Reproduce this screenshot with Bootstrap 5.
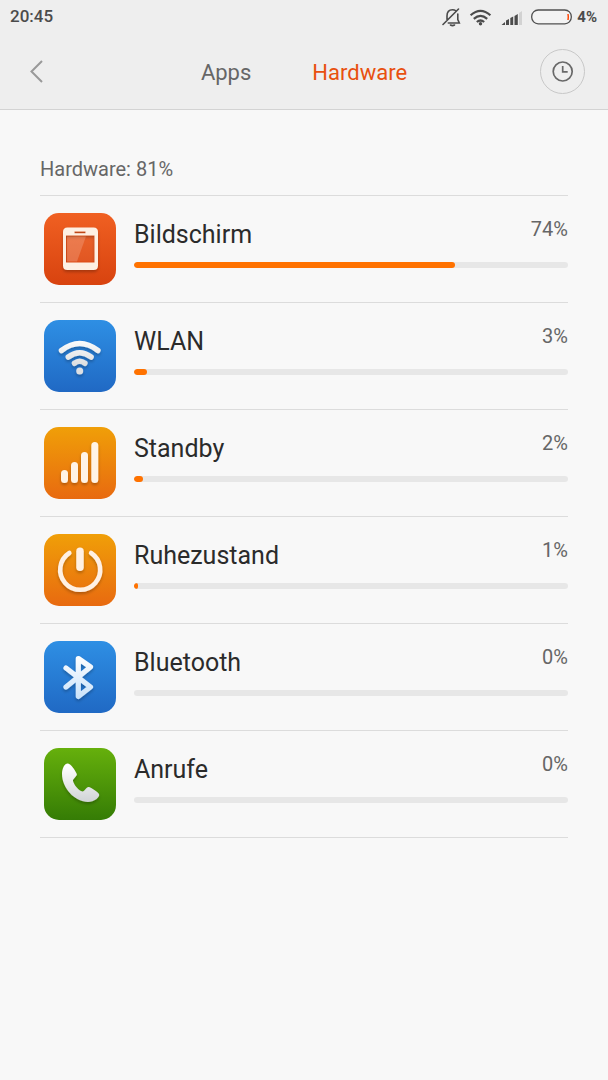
<!DOCTYPE html>
<html lang="de">
<head>
<meta charset="utf-8">
<meta name="viewport" content="width=device-width, initial-scale=1">
<title>Hardware</title>
<link rel="stylesheet" href="https://cdn.jsdelivr.net/npm/bootstrap@5.3.0/dist/css/bootstrap.min.css">
<style>
  body { font-family: Roboto, "Noto Sans", sans-serif; background: #f8f8f8; color: #2b2b2b; }
  .app-header { background: #eee; border-bottom: 1px solid #d3d3d3; }
  .status-bar { height: 34px; padding: 0 11px 0 10px; font-size: 17px; font-weight: 500; color: #4b4b4b; }
  .status-charge { font-size: 15px; font-weight: 700; }
  .toolbar { height: 75px; padding: 0 23px; }
  .tool-btn { width: 45px; height: 45px; padding: 0; border: 0; background: none; color: #999; }
  .tool-btn svg { display: block; }
  .history-btn { border: 1px solid #c8c8c8; border-radius: 50%; color: #686868; }
  .tabs { gap: 61px; }
  .tabs a { font-size: 22px; line-height: 30px; padding-top: 3px; color: #666; text-decoration: none; }
  .tabs a.active { color: #e8500f; }
  .usage { padding: 44px 40px; }
  .usage-total { font-size: 20px; line-height: 30px; margin: 0 0 11px; color: #666; }
  .usage-list { border-top: 1px solid #dcdcdc; }
  .usage-item { border-bottom: 1px solid #dcdcdc; padding: 17px 0 17px 4px; gap: 18px; }
  .usage-icon { width: 72px; height: 72px; flex: none; }
  .usage-name { font-size: 25px; line-height: 30px; font-weight: 400; margin: 7px 0 0; }
  .usage-value { font-size: 20px; line-height: 24px; margin-top: 4px; color: #666; }
  .usage-bar { height: 6px; margin-top: 12px; border-radius: 3px; background: #e7e7e7; }
  .usage-bar .progress-bar { background: #ff7200; border-radius: 3px; }
</style>
</head>
<body>
<svg width="0" height="0" class="position-absolute" aria-hidden="true">
  <defs>
    <linearGradient id="red" x2="0" y2="1"><stop stop-color="#f06022"/><stop offset="1" stop-color="#d8430f"/></linearGradient>
    <linearGradient id="blue" x2="0" y2="1"><stop stop-color="#2e8fe4"/><stop offset="1" stop-color="#2069c4"/></linearGradient>
    <linearGradient id="amber" x2="0" y2="1"><stop stop-color="#f09f08"/><stop offset="1" stop-color="#e86a10"/></linearGradient>
    <linearGradient id="green" x2="0" y2="1"><stop stop-color="#66b00c"/><stop offset="1" stop-color="#357c05"/></linearGradient>
    <linearGradient id="silver" gradientUnits="userSpaceOnUse" x1="0" y1="18" x2="0" y2="54"><stop stop-color="#fff"/><stop offset="1" stop-color="#d0d3d6"/></linearGradient>
    <linearGradient id="ice" gradientUnits="userSpaceOnUse" x1="0" y1="14" x2="0" y2="58"><stop stop-color="#fff"/><stop offset="1" stop-color="#c9e2fa"/></linearGradient>
    <filter id="drop" x="-30%" y="-30%" width="160%" height="160%"><feDropShadow dx="0" dy="2" stdDeviation="1.5" flood-opacity=".25"/></filter>
  </defs>
</svg>

<header class="app-header">
  <div class="status-bar d-flex align-items-center justify-content-between">
    <span>20:45</span>
    <div class="d-flex align-items-center">
      <svg width="85" height="24" viewBox="442 4 85 24" fill="none" stroke="#4b4b4b" stroke-width="1.6" stroke-linecap="round" aria-hidden="true">
        <path d="M443 23.500 458.500 8M447 18.500V15q0-6.300 5.500-6.300 2 0 3 .8M457.800 13v5.500l1.500 3.500h-11M450.500 24q2 1.200 4 0"/>
        <g stroke-width="2.200" stroke-linecap="butt">
          <path d="M470.600 14.300q9.900-8.800 19.800 0M473.800 17.800q6.700-5.800 13.400 0M476.800 21q3.700-3 7.400 0"/>
        </g>
        <circle cx="480.500" cy="22.700" r="1.700" fill="#4b4b4b" stroke="none"/>
        <path stroke="none" fill="#4b4b4b" d="M501.500 24l3.500-3v3zM506 19.500l3-1.500v6h-3zM510.300 17l2.900-1.500V24h-2.900zM514.500 15l3.300-2v11h-3.300z"/>
        <path stroke="none" fill="#d2d2d2" d="M519 12l3-2v14h-3z"/>
      </svg>
      <svg width="42" height="18" viewBox="0 0 42 18" class="ms-1 me-1" role="img" aria-label="Akku">
        <rect x="0.700" y="2" width="39.600" height="13.800" rx="6.500" fill="#f3f3f3" stroke="#505050" stroke-width="1.300"/>
        <path d="M37 6q1.200 3 0 6z" fill="#ff4a0a" stroke="#ff4a0a"/>
      </svg>
      <span class="status-charge">4%</span>
    </div>
  </div>
  <div class="toolbar d-flex align-items-center">
    <button type="button" class="tool-btn" aria-label="Zurück">
      <svg width="45" height="45" viewBox="0 0 45 45" fill="none" stroke="currentColor" stroke-width="2"><path d="M19 12 8.500 22.500 19 33"/></svg>
    </button>
    <nav class="tabs flex-grow-1 d-flex justify-content-center" aria-label="Ansicht">
      <a href="#apps">Apps</a>
      <a href="#hardware" class="active" aria-current="page">Hardware</a>
    </nav>
    <button type="button" class="tool-btn history-btn" aria-label="Verlauf">
      <svg width="43" height="43" viewBox="0 0 43 43" fill="none" stroke="currentColor" stroke-width="1.700"><circle cx="21.700" cy="21.500" r="9.500"/><path d="M21.700 16v5.800h5"/></svg>
    </button>
  </div>
</header>

<main class="usage" id="hardware">
  <h1 class="usage-total fw-normal">Hardware: 81%</h1>
  <ul class="usage-list list-unstyled mb-0">
    <li class="usage-item d-flex">
      <svg class="usage-icon" viewBox="0 0 72 72" aria-hidden="true">
        <rect width="72" height="72" rx="15" fill="url(#red)"/>
        <g filter="url(#drop)"><path fill="#fdf0e3" fill-rule="evenodd" d="M23.500 14.500h26q4.500 0 4.500 4.500v33.500q0 4.500-4.500 4.500h-26q-4.500 0-4.500-4.500V19q0-4.500 4.500-4.500zm-1.500 8v27h28.500v-27zm8.500-4v1.800h11v-1.800z"/></g>
        <path d="M23 23.500h19L33 48.500H23z" fill="#fff" opacity=".22"/><path d="M42 23.500h8v25H33z" fill="#fff" opacity=".06"/>
      </svg>
      <div class="flex-grow-1">
        <div class="d-flex justify-content-between align-items-start"><h2 class="usage-name">Bildschirm</h2><span class="usage-value">74%</span></div>
        <div class="progress usage-bar" role="progressbar" aria-label="Bildschirm" aria-valuenow="74" aria-valuemin="0" aria-valuemax="100"><div class="progress-bar" style="width:74%"></div></div>
      </div>
    </li>
    <li class="usage-item d-flex">
      <svg class="usage-icon" viewBox="0 0 72 72" aria-hidden="true">
        <rect width="72" height="72" rx="15" fill="url(#blue)"/>
        <g filter="url(#drop)" fill="none" stroke="url(#silver)" stroke-width="5.500" stroke-linecap="round"><path d="M17.500 30.500q18.200-14 36.400 0M24.300 37q11.400-8.500 22.800 0M30.500 43.300q5.200-4 10.400 0"/><circle cx="35.700" cy="51" r="3.500" fill="#dcdfe3" stroke="none"/></g>
      </svg>
      <div class="flex-grow-1">
        <div class="d-flex justify-content-between align-items-start"><h2 class="usage-name">WLAN</h2><span class="usage-value">3%</span></div>
        <div class="progress usage-bar" role="progressbar" aria-label="WLAN" aria-valuenow="3" aria-valuemin="0" aria-valuemax="100"><div class="progress-bar" style="width:3%"></div></div>
      </div>
    </li>
    <li class="usage-item d-flex">
      <svg class="usage-icon" viewBox="0 0 72 72" aria-hidden="true">
        <rect width="72" height="72" rx="15" fill="url(#amber)"/>
        <g filter="url(#drop)" fill="#fff3e6"><rect x="17" y="43" width="7" height="13" rx="3.500"/><rect x="27" y="35" width="7" height="21" rx="3.500"/><rect x="37" y="25" width="7" height="31" rx="3.500"/><rect x="47.300" y="15" width="7" height="41" rx="3.500"/></g>
      </svg>
      <div class="flex-grow-1">
        <div class="d-flex justify-content-between align-items-start"><h2 class="usage-name">Standby</h2><span class="usage-value">2%</span></div>
        <div class="progress usage-bar" role="progressbar" aria-label="Standby" aria-valuenow="2" aria-valuemin="0" aria-valuemax="100"><div class="progress-bar" style="width:2%"></div></div>
      </div>
    </li>
    <li class="usage-item d-flex">
      <svg class="usage-icon" viewBox="0 0 72 72" aria-hidden="true">
        <rect width="72" height="72" rx="15" fill="url(#amber)"/>
        <g filter="url(#drop)" fill="none" stroke="#fff0e3" stroke-linecap="round"><path stroke-width="4.600" d="M25.300 19a20 20 0 1 0 21.800 0"/><path stroke-width="7.500" d="M36 17.300v16"/></g>
      </svg>
      <div class="flex-grow-1">
        <div class="d-flex justify-content-between align-items-start"><h2 class="usage-name">Ruhezustand</h2><span class="usage-value">1%</span></div>
        <div class="progress usage-bar" role="progressbar" aria-label="Ruhezustand" aria-valuenow="1" aria-valuemin="0" aria-valuemax="100"><div class="progress-bar" style="width:1%"></div></div>
      </div>
    </li>
    <li class="usage-item d-flex">
      <svg class="usage-icon" viewBox="0 0 72 72" aria-hidden="true">
        <rect width="72" height="72" rx="15" fill="url(#blue)"/>
        <path filter="url(#drop)" fill="none" stroke="url(#ice)" stroke-width="5.200" stroke-linecap="round" stroke-linejoin="round" d="M22 27 46.500 46 34.300 55.500V17.500L46.500 26 22 46"/>
      </svg>
      <div class="flex-grow-1">
        <div class="d-flex justify-content-between align-items-start"><h2 class="usage-name">Bluetooth</h2><span class="usage-value">0%</span></div>
        <div class="progress usage-bar" role="progressbar" aria-label="Bluetooth" aria-valuenow="0" aria-valuemin="0" aria-valuemax="100"><div class="progress-bar" style="width:0%"></div></div>
      </div>
    </li>
    <li class="usage-item d-flex">
      <svg class="usage-icon" viewBox="0 0 72 72" aria-hidden="true">
        <rect width="72" height="72" rx="15" fill="url(#green)"/>
        <path filter="url(#drop)" fill="url(#silver)" d="M18 26C18 20 21 15 24 15.500C27 16 31 22 32.800 26C33.500 28 28.500 31 29 33C30 37 35 43 38.500 43.500C41 43.500 42 38.500 45 39C48 40 54 44 55 46C56.500 49 50 54 44 54C31 54 18 40 18 26z"/>
      </svg>
      <div class="flex-grow-1">
        <div class="d-flex justify-content-between align-items-start"><h2 class="usage-name">Anrufe</h2><span class="usage-value">0%</span></div>
        <div class="progress usage-bar" role="progressbar" aria-label="Anrufe" aria-valuenow="0" aria-valuemin="0" aria-valuemax="100"><div class="progress-bar" style="width:0%"></div></div>
      </div>
    </li>
  </ul>
</main>
<script src="https://cdn.jsdelivr.net/npm/bootstrap@5.3.0/dist/js/bootstrap.bundle.min.js"></script>
</body>
</html>
